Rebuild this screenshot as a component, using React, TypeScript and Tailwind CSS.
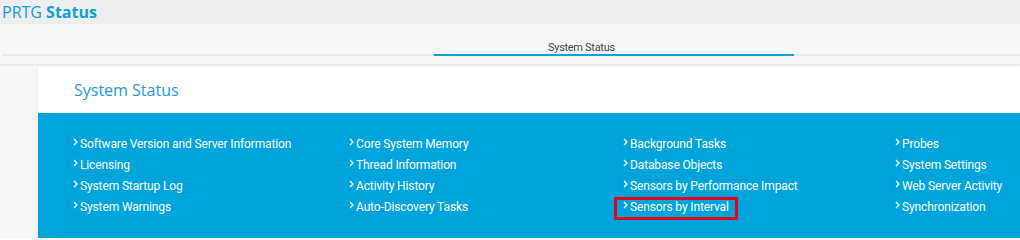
import React from "react";

const cols: string[][] = [
  ["Software Version and Server Information", "Licensing", "System Startup Log", "System Warnings"],
  ["Core System Memory", "Thread Information", "Activity History", "Auto-Discovery Tasks"],
  ["Background Tasks", "Database Objects", "Sensors by Performance Impact", "Sensors by Interval"],
  ["Probes", "System Settings", "Web Server Activity", "Synchronization"],
];

function Chevron() {
  return (
    <svg width="5" height="8" viewBox="0 0 5 8" className="mt-[-4px] mr-[2px] shrink-0">
      <polyline points="1,1 4,4 1,7" fill="none" stroke="white" strokeWidth="1.3" />
    </svg>
  );
}

function LinkItem({ label }: { label: string }) {
  const highlighted = label === "Sensors by Interval";
  return (
    <div className="relative flex items-center h-[21px] text-white text-[12px] tracking-[-0.13px] font-['Roboto',sans-serif] whitespace-nowrap">
      <Chevron />
      <span>{label}</span>
      {highlighted && (
        <span className="absolute left-[-9px] w-[124px] top-[1px] bottom-[-3px] border-[3px] border-[#e5001c] pointer-events-none" />
      )}
    </div>
  );
}

export default function App() {
  return (
    <div className="w-[1020px] h-[238px] overflow-hidden bg-[#f7f7f7] font-['Open_Sans',sans-serif]">
      <div className="h-[24px] bg-[#eeeeee] pl-[2px] flex items-center text-[16px] text-[#0aa0da] leading-none">
        <span className="font-normal">PRTG&nbsp;</span>
        <span className="font-bold">Status</span>
      </div>
      <div className="h-[30px]" />
      <div className="ml-[2px] h-[2px] bg-[#eaeaea] relative">
        <div className="absolute left-[432px] top-0 w-[360px] h-[2px] bg-[#00a3db]" />
        <div className="absolute left-[546px] bottom-[3px] text-[11px] leading-none text-[#444] font-['Roboto',sans-serif] tracking-[-0.3px]">
          System Status
        </div>
      </div>
      <div className="h-[10px] border-b-2 border-[#ececec]" />
      <div className="ml-[38px] bg-white shadow-[0_0_3px_rgba(0,0,0,0.08)]">
        <div className="h-[47px] flex items-center pl-[36px] text-[16px] text-[#1e9bd7]">System Status</div>
        <div className="bg-[#00a4dc] h-[200px] pl-[35px] pt-[20px] grid grid-cols-[276px_274px_272px_1fr]">
          {cols.map((col, i) => (
            <div key={i} className="flex flex-col">
              {col.map((l) => (
                <LinkItem key={l} label={l} />
              ))}
            </div>
          ))}
        </div>
      </div>
    </div>
  );
}
